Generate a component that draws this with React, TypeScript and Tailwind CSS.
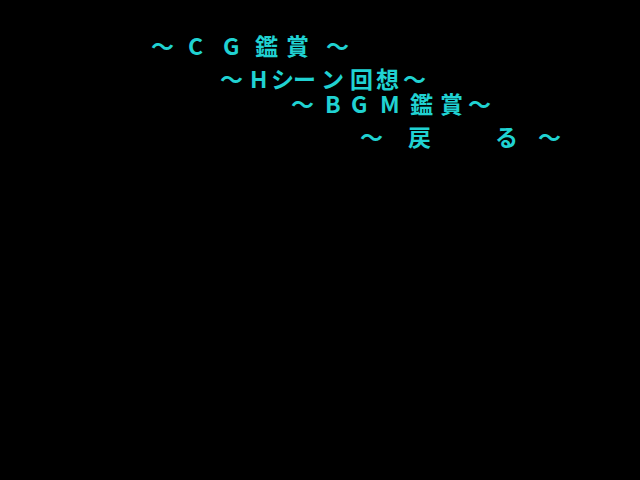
import React from "react";

const font = { fontFamily: '"Noto Sans CJK JP", "Noto Sans", sans-serif' };

export default function App() {
  return (
    <div
      className="w-[640px] h-[480px] bg-black text-[#20d2d2] text-[23px] leading-[23px] font-bold overflow-hidden pt-[34px]"
      style={font}
    >
      <div className="flex h-[23px] pl-[151px] whitespace-nowrap">
        <span className="w-[37px] shrink-0">～</span>
        <span className="w-[35px] shrink-0">C</span>
        <span className="w-[32px] shrink-0">G</span>
        <span className="w-[31px] shrink-0">鑑</span>
        <span className="w-[40px] shrink-0">賞</span>
        <span className="w-[30px] shrink-0">～</span>
      </div>
      <div className="flex h-[23px] mt-[10px] pl-[220px] whitespace-nowrap">
        <span className="w-[30px] shrink-0">～</span>
        <span className="w-[21px] shrink-0">H</span>
        <span className="w-[22px] shrink-0">シ</span>
        <span className="w-[28px] shrink-0">ー</span>
        <span className="w-[29px] shrink-0">ン</span>
        <span className="w-[26px] shrink-0">回</span>
        <span className="w-[27px] shrink-0">想</span>
        <span className="w-[24px] shrink-0">～</span>
      </div>
      <div className="flex h-[23px] mt-[2px] pl-[291px] whitespace-nowrap">
        <span className="w-[34px] shrink-0">～</span>
        <span className="w-[26px] shrink-0">B</span>
        <span className="w-[29px] shrink-0">G</span>
        <span className="w-[30px] shrink-0">M</span>
        <span className="w-[30px] shrink-0">鑑</span>
        <span className="w-[28px] shrink-0">賞</span>
        <span className="w-[24px] shrink-0">～</span>
      </div>
      <div className="flex h-[23px] mt-[10px] pl-[360px] whitespace-nowrap">
        <span className="w-[48px] shrink-0">～</span>
        <span className="w-[87px] shrink-0">戻</span>
        <span className="w-[43px] shrink-0">る</span>
        <span className="w-[24px] shrink-0">～</span>
      </div>
    </div>
  );
}
